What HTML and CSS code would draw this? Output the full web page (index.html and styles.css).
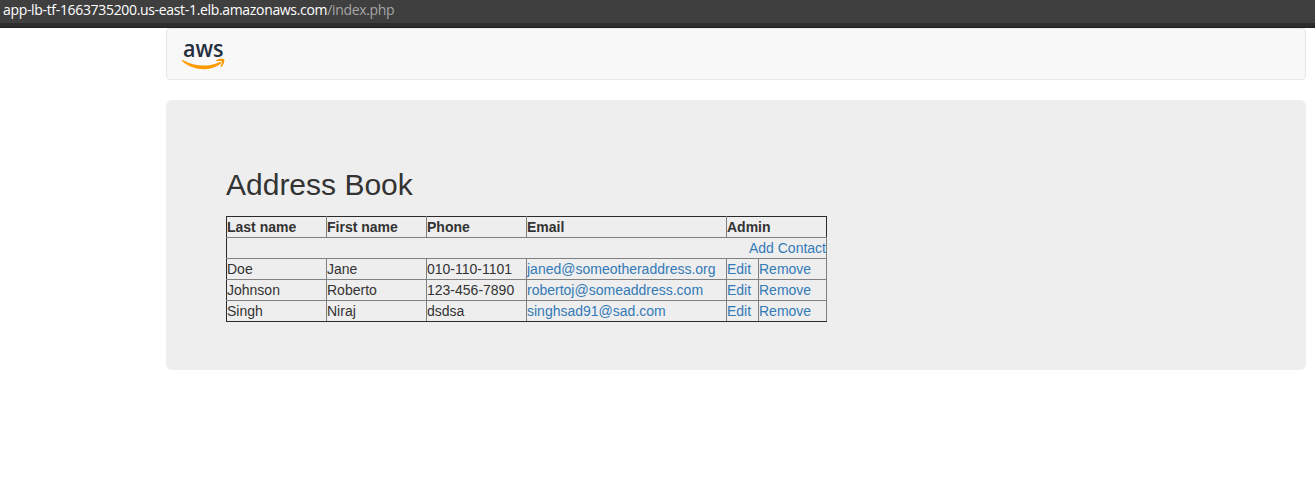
FILE: index.html
```html
<!DOCTYPE html>
<html lang="en">
<head>
<meta charset="utf-8">
<title>Address Book</title>
<link rel="stylesheet" href="styles.css">
</head>
<body>
<div class="address-bar"><span class="host">app-lb-tf-1663735200.us-east-1.elb.amazonaws.com</span><span class="path">/index.php</span></div>
<div class="container">
  <nav class="navbar">
    <svg class="logo" width="44" height="30" viewBox="0 0 44 30" role="img" aria-label="aws">
      <text class="logo-text" x="1" y="14.800" textLength="40.5" lengthAdjust="spacingAndGlyphs">aws</text>
      <path d="M.6 18C12 24.300 26 25.600 37.300 20.200C38.800 19.600 39.800 20.900 38.500 21.900C27.500 29.900 10.500 28.700.1 19C-.4 18.300 0 17.700.6 18Z" fill="#f90"/>
      <path d="M34.300 18.300C37 16.500 41.500 16.600 42.200 17.500C42.900 18.700 41.500 23 39.300 25C38.800 25.300 38.400 25.100 38.600 24.600C39.400 22.800 40.200 20.300 39.700 19.600C39.200 18.900 36.800 19 34.600 19.200C34 19.300 33.900 18.700 34.300 18.300Z" fill="#f90"/>
    </svg>
  </nav>
  <main class="jumbotron">
    <h2>Address Book</h2>
    <table class="contacts">
      <colgroup><col class="name"><col class="name"><col class="name"><col class="email"><col class="edit"><col class="remove"></colgroup>
      <tr class="head"><th>Last name</th><th>First name</th><th>Phone</th><th>Email</th><th class="admin" colspan="2">Admin</th></tr>
      <tr><td class="add" colspan="6"><a href="#">Add Contact</a></td></tr>
      <tr><td>Doe</td><td>Jane</td><td>010-110-1101</td><td><a href="#">janed@someotheraddress.org</a></td><td><a href="#">Edit</a></td><td><a href="#">Remove</a></td></tr>
      <tr><td>Johnson</td><td>Roberto</td><td>123-456-7890</td><td><a href="#">robertoj@someaddress.com</a></td><td><a href="#">Edit</a></td><td><a href="#">Remove</a></td></tr>
      <tr class="last"><td>Singh</td><td>Niraj</td><td>dsdsa</td><td><a href="#">singhsad91@sad.com</a></td><td><a href="#">Edit</a></td><td><a href="#">Remove</a></td></tr>
    </table>
  </main>
</div>
</body>
</html>
```
FILE: styles.css
```css
* { box-sizing: border-box; }
body {
  margin: 0;
  background: #fff;
  color: #333;
  font: 14px/20px "Liberation Sans", Arial, sans-serif;
}
.address-bar {
  height: 28px;
  background: linear-gradient(#3f3f3f 0 23px, #2d2d2d 23px 27px, #202020 27px);
  padding-left: 3px;
  font: 14px/19px "Open Sans", "Noto Sans", sans-serif;
  letter-spacing: -0.33px;
  white-space: nowrap;
}
.host { color: #fff; }
.path { color: #a5a5a5; }
.container { width: 1140px; margin-left: 166px; }
.navbar {
  height: 52px;
  margin-bottom: 20px;
  padding: 13px 15px;
  background: #f8f8f8;
  border: 1px solid #e7e7e7;
  border-radius: 4px;
}
.logo { display: block; overflow: visible; }
.logo-text { font: 600 24px "Open Sans", sans-serif; fill: #252f3e; }
.jumbotron {
  height: 270px;
  padding: 68px 60px 48px;
  background: #eee;
  border-radius: 6px;
}
h2 { margin: 0 0 15px; font-size: 30px; font-weight: 400; line-height: 33px; }
.contacts {
  width: 601px;
  table-layout: fixed;
  border-collapse: collapse;
  border: 1px solid #2b2b2b;
}
.name { width: 100px; }
.email { width: 200px; }
.edit { width: 32px; }
.remove { width: 68px; }
th, td { height: 21px; padding: 0; border: 1px solid #808080; text-align: left; white-space: nowrap; }
tr > :first-child { border-left-color: #2b2b2b; }
.head th { border-top-color: #2b2b2b; }
.head .admin { border-right-color: #2b2b2b; }
.last td { border-bottom-color: #2b2b2b; }
.contacts .add { text-align: right; }
a { color: #337ab7; text-decoration: none; }
```
